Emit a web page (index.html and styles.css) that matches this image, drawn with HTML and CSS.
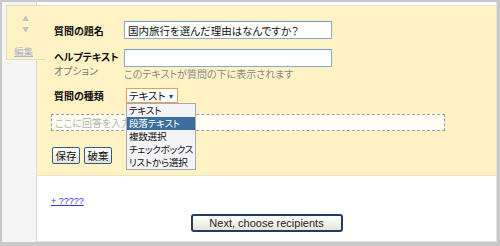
FILE: index.html
```html
<!DOCTYPE html>
<html lang="ja">
<head>
    <meta charset="UTF-8">
    <title>質問の編集</title>
    <link rel="stylesheet" href="styles.css">
</head>
<body>

<div class="frame">
    <div class="side"></div>

    <div class="panel">
        <div class="question">
            <div class="row">
                <div class="label"><b>質問の題名</b></div>
                <input class="field" type="text" value="国内旅行を選んだ理由はなんですか？">
            </div>

            <div class="row help-row">
                <div class="label">
                    <b>ヘルプテキスト</b>
                    <span class="sub">オプション</span>
                </div>
                <div>
                    <input class="field" type="text">
                    <div class="hint">このテキストが質問の下に表示されます</div>
                </div>
            </div>

            <div class="row type-row">
                <div class="label"><b>質問の種類</b></div>
                <div class="select-wrap">
                    <div class="select">テキスト<span class="caret">&#9662;</span></div>
                    <ul class="options">
                        <li>テキスト</li>
                        <li class="selected">段落テキスト</li>
                        <li>複数選択</li>
                        <li>チェックボックス</li>
                        <li>リストから選択</li>
                    </ul>
                </div>
            </div>

            <div class="answer">ここに回答を入力</div>

            <div class="actions">
                <button class="small-btn">保存</button>
                <button class="small-btn">破棄</button>
            </div>
        </div>

        <div class="footer">
            <a class="add-link" href="#">+ ?????</a>
            <div class="next-wrap">
                <button class="next-btn">Next, choose recipients</button>
            </div>
        </div>
    </div>

    <div class="tab">
        <span class="arrow">&#9650;</span>
        <span class="arrow">&#9660;</span>
        <a class="edit" href="#">編集</a>
    </div>
</div>

</body>
</html>
```

FILE: styles.css
```css
body {
    margin: 0;
    font-family: "Noto Sans CJK JP", "Liberation Sans", sans-serif;
    font-size: 10px;
    font-feature-settings: "palt";
    color: #111;
}
.frame {
    position: relative;
    width: 500px;
    height: 246px;
    box-sizing: border-box;
    display: flex;
    border-style: solid;
    border-color: #c9c9c9;
    border-width: 2px 3px 4px 2px;
    background-color: #fff;
}
.side {
    width: 34px;
    background-color: #f5f5f5;
    border-right: 1px solid #dcdcdc;
}
.panel {
    flex: 1;
    display: flex;
    flex-direction: column;
    padding-top: 3px;
    border-right: 1px solid #e2e2e2;
    border-bottom: 1px solid #e2e2e2;
}
.question {
    position: relative;
    background-color: #fff3c6;
    border-top: 1px solid #e6e6e6;
    border-bottom: 1px solid #ece3bd;
    padding: 15px 0 11px 17px;
}
.row {
    display: flex;
    align-items: center;
    margin-bottom: 10px;
}
.label {
    width: 70px;
    line-height: 13px;
}
.label b {
    display: block;
    font-weight: bold;
}
.sub {
    display: block;
    color: #777;
}
.field {
    display: block;
    width: 208px;
    height: 18px;
    box-sizing: border-box;
    margin: 0;
    padding: 0 3px;
    border: 1px solid #8faac8;
    border-top-color: #7d98b8;
    background-color: #fff;
    font-family: inherit;
    font-size: 10.5px;
    font-feature-settings: "palt";
    color: #111;
}
.help-row {
    align-items: flex-start;
    margin-bottom: 8px;
}
.help-row .label {
    padding-top: 1px;
    line-height: 14px;
}
.hint {
    color: #888;
    line-height: 12px;
    margin-top: 1px;
}
.type-row {
    margin-bottom: 11px;
}
.select-wrap {
    position: relative;
    margin-left: 2px;
}
.select {
    width: 52px;
    height: 15px;
    box-sizing: border-box;
    border: 1px solid #e8a13c;
    background-color: #fff;
    line-height: 13px;
    padding-left: 2px;
    font-size: 10.5px;
    position: relative;
}
.caret {
    position: absolute;
    right: 4px;
    top: 0;
    font-size: 8px;
    color: #24446e;
}
.options {
    position: absolute;
    left: 0;
    top: 15px;
    z-index: 2;
    width: 70px;
    box-sizing: border-box;
    margin: 0;
    padding: 0;
    list-style: none;
    background-color: #f4f4f8;
    border: 1px solid #a6a9b6;
}
.options li {
    height: 13px;
    line-height: 13px;
    padding-left: 2px;
    font-size: 9.6px;
    letter-spacing: -0.3px;
    white-space: nowrap;
    overflow: hidden;
}
.options .selected {
    background-color: #3c6d9c;
    color: #fff;
}
.answer {
    width: 394px;
    height: 17px;
    box-sizing: border-box;
    margin-left: -3px;
    border: 1px dashed #a0a0a0;
    background-color: #fffdf4;
    color: #b4b4b4;
    line-height: 15px;
    padding-left: 3px;
    margin-bottom: 16px;
}
.actions {
    display: flex;
    gap: 4px;
    margin-left: -2px;
}
.small-btn {
    width: 28px;
    height: 17px;
    padding: 0;
    border: 1px solid #3d5a7a;
    border-radius: 2px;
    background: linear-gradient(#ffffff, #e6e4da);
    font-family: inherit;
    font-size: 10.5px;
    font-feature-settings: "palt";
    color: #111;
}
.footer {
    flex: 1;
    padding: 16px 0 0 14px;
}
.add-link {
    font-family: "Liberation Sans", sans-serif;
    font-size: 9px;
    color: #3535cf;
    text-decoration: underline;
}
.next-wrap {
    display: flex;
    justify-content: center;
    padding-right: 14px;
    margin-top: 7px;
}
.next-btn {
    width: 152px;
    height: 18px;
    padding: 0;
    border: 2px solid #1f3e66;
    border-radius: 3px;
    background: linear-gradient(#ffffff, #e7e5d8);
    font-family: "Liberation Sans", sans-serif;
    font-size: 11px;
    color: #222;
}
.tab {
    position: absolute;
    left: 4px;
    top: 3px;
    width: 40px;
    height: 55px;
    background-color: #fff3c6;
    border: 1px solid #e4dcbc;
    border-right: none;
    display: flex;
    flex-direction: column;
    align-items: center;
    padding-top: 7px;
    box-sizing: border-box;
    padding-right: 2px;
}
.arrow {
    font-size: 7px;
    line-height: 11px;
    color: #c4c4c4;
}
.edit {
    margin-top: 9px;
    margin-right: 4px;
    font-size: 9.5px;
    color: #aab4cc;
    text-decoration: underline;
}
```
